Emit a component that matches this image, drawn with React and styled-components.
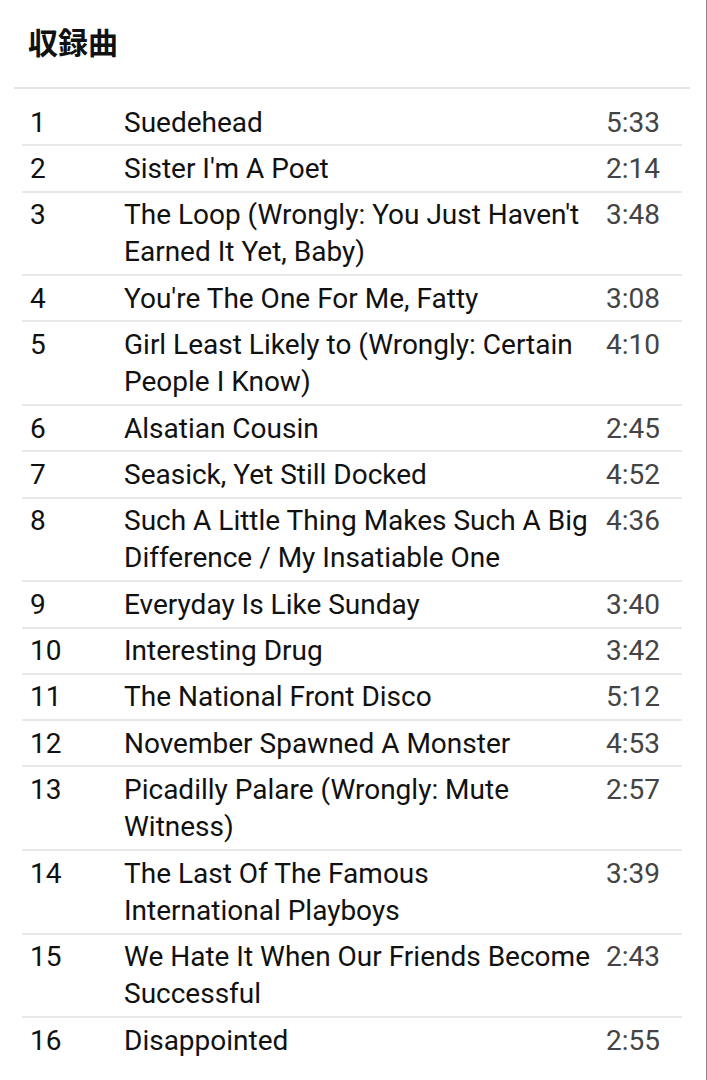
import React from "react";
import styled, { createGlobalStyle } from "styled-components";

const GlobalStyle = createGlobalStyle`
  html, body { margin: 0; padding: 0; background: #fff; }
  body { font-family: Roboto, "Noto Sans CJK JP", sans-serif; }
`;

const Page = styled.div`
  box-sizing: border-box;
  width: 707px;
  min-height: 1080px;
  border-right: 1px solid #8a8a8a;
  padding: 0 16px 0 14px;
`;

const Heading = styled.h2`
  box-sizing: border-box;
  margin: 0 0 11px;
  padding: 21px 0 0 14px;
  height: 89px;
  font-family: "Noto Sans CJK JP", sans-serif;
  font-weight: 700;
  font-size: 30px;
  line-height: 40px;
  color: #111;
  border-bottom: 2px solid #e4e4e4;
`;

const List = styled.div`
  margin: 0 8px 0 8px;
`;

const Row = styled.div`
  display: grid;
  grid-template-columns: 94px 1fr auto;
  padding: 3.5px 22px 3.5px 8px;
  border-bottom: 2px solid #e8e8e8;
  font-size: 28px;
  line-height: 37.3px;

  &:last-child {
    border-bottom: none;
  }
`;

const Num = styled.div`
  color: #111;
`;

const Title = styled.div`
  color: #111;
  padding-right: 4px;
`;

const Time = styled.div`
  color: #444;
  text-align: right;
`;

const tracks = [
  ["1", "Suedehead", "5:33"],
  ["2", "Sister I'm A Poet", "2:14"],
  ["3", "The Loop (Wrongly: You Just Haven't Earned It Yet, Baby)", "3:48"],
  ["4", "You're The One For Me, Fatty", "3:08"],
  ["5", "Girl Least Likely to (Wrongly: Certain People I Know)", "4:10"],
  ["6", "Alsatian Cousin", "2:45"],
  ["7", "Seasick, Yet Still Docked", "4:52"],
  ["8", "Such A Little Thing Makes Such A Big Difference / My Insatiable One", "4:36"],
  ["9", "Everyday Is Like Sunday", "3:40"],
  ["10", "Interesting Drug", "3:42"],
  ["11", "The National Front Disco", "5:12"],
  ["12", "November Spawned A Monster", "4:53"],
  ["13", "Picadilly Palare (Wrongly: Mute Witness)", "2:57"],
  ["14", "The Last Of The Famous International\u00a0Playboys", "3:39"],
  ["15", "We Hate It When Our Friends Become Successful", "2:43"],
  ["16", "Disappointed", "2:55"],
];

export default function App() {
  return (
    <>
      <GlobalStyle />
      <Page>
        <Heading>収録曲</Heading>
        <List>
          {tracks.map(([n, t, d]) => (
            <Row key={n}>
              <Num>{n}</Num>
              <Title>{t}</Title>
              <Time>{d}</Time>
            </Row>
          ))}
        </List>
      </Page>
    </>
  );
}
